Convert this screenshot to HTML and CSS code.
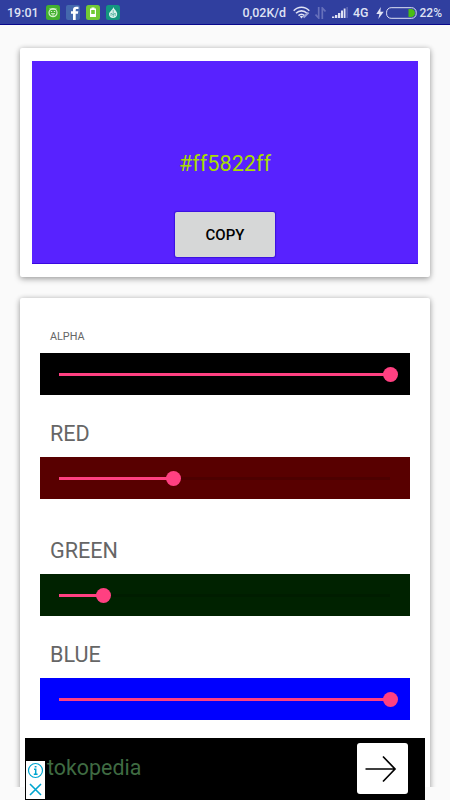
FILE: index.html
```html
<!DOCTYPE html>
<html>
<head>
    <meta charset="utf-8">
    <title>Color Picker</title>
    <link rel="stylesheet" href="styles.css">
</head>
<body>
    <header class="statusbar">
        <span class="clock">19:01</span>
        <svg class="app-icon" width="14" height="15" viewBox="0 0 14 15">
            <rect width="14" height="15" rx="2.5" fill="#43b02f"/>
            <path d="M4 5L3.5 3L5.5 4.2H8.5L10.5 3L10 5" fill="#d5f2cb"/>
            <circle cx="7" cy="7.7" r="4" fill="none" stroke="#d5f2cb" stroke-width="1.2"/>
            <path d="M4.8 6.5H6.2M7.8 6.5H9.2M5 8.7H9M6 10H8" stroke="#d5f2cb" fill="none"/>
        </svg>
        <svg class="app-icon" width="14" height="15" viewBox="0 0 14 15">
            <rect width="14" height="15" rx="2" fill="#4468ad"/>
            <path d="M7 15V8.8H5V6.3H7V4.8C7 2.6 8.2 1.7 10 1.7H12.5V4H10.7C9.9 4 9.7 4.4 9.7 5.1V6.3H12.3L11.9 8.8H9.7V15Z" fill="#fff"/>
        </svg>
        <svg class="app-icon" width="14" height="15" viewBox="0 0 14 15">
            <rect width="14" height="15" rx="2.5" fill="#72c935"/>
            <path d="M4 3.5H5.5V2.5H8.5V3.5H10V12H4Z" fill="#fff"/>
            <rect x="5.2" y="5" width="3.6" height="4" fill="#72c935"/>
        </svg>
        <svg class="app-icon" width="14" height="15" viewBox="0 0 14 15">
            <rect width="14" height="15" rx="2.5" fill="#13967f"/>
            <path d="M7.4 2C8 4.5 11.2 6 11.2 9C11.2 11.5 9.3 13 7 13C4.6 13 3 11.3 3 9.2C3 6.5 6.5 5.5 7.4 2Z" fill="#d9f3ec"/>
            <path d="M7.2 5V12M5 8V11M9.2 8V11M5 8L7.2 10L9.2 8" stroke="#3da893" stroke-width=".7" fill="none"/>
        </svg>

        <span class="speed">0,02K/d</span>
        <svg class="wifi" width="17" height="13" viewBox="0 0 17 13">
            <path d="M.7 4.7C5 0 12 0 16.3 4.7M3 7.3C6.2 4 10.8 4 14 7.3M5.5 9.7C7.3 8 9.7 8 11.5 9.7" fill="none" stroke="#dfe2f4" stroke-width="1.6"/>
            <path d="M6.8 10.5Q8.5 9.2 10.2 10.5L8.5 12.4Z" fill="#dfe2f4"/>
            <path d="M10.5 11.5L15.5 6.5" stroke="#9ea6d8" stroke-width="2.2"/>
        </svg>
        <svg class="data" width="11" height="12" viewBox="0 0 11 12">
            <path d="M3.7 0V11L.5 7.5M7.3 12V1L10.5 4.5" fill="none" stroke="#6670bb" stroke-width="1.7"/>
        </svg>
        <svg class="signal" width="16" height="11" viewBox="0 0 16 11">
            <path d="M0 11V9.5H2.3V11ZM3 11V8H5.3V11ZM6 11V6H8.3V11ZM9 11V3.5H11V11ZM11.7 11V1.5H13.5V11Z" fill="#dfe2f4"/>
            <path d="M14.3 11V0H16V11Z" fill="#5964b5"/>
        </svg>
        <span class="network">4G</span>
        <svg class="bolt" width="8" height="12" viewBox="0 0 8 12">
            <path d="M4.8 0L.3 7H3.4L2.3 12L7.7 4.7H4.4Z" fill="#dfe2f4"/>
        </svg>
        <svg class="battery" width="31" height="12" viewBox="0 0 31 12">
            <rect x=".6" y=".7" width="29.6" height="10.6" rx="4.5" fill="none" stroke="#dfe2f4"/>
            <path d="M22.5 2H25C30.3 2 30.3 10 25 10H22.5Z" fill="#49bd13"/>
        </svg>
        <span class="percent">22%</span>
    </header>

    <main class="content">
        <section class="card preview">
            <div class="swatch">
                <span class="hex">#ff5822ff</span>
                <button type="button" class="copy">COPY</button>
            </div>
        </section>

        <section class="card sliders">
            <label class="small">ALPHA</label>
            <div class="bar alpha"><div class="track"><div class="fill" style="width: 100%"></div></div></div>

            <label>RED</label>
            <div class="bar red"><div class="track"><div class="fill" style="width: 34.5%"></div></div></div>

            <label class="green-label">GREEN</label>
            <div class="bar green"><div class="track"><div class="fill" style="width: 13.3%"></div></div></div>

            <label>BLUE</label>
            <div class="bar blue"><div class="track"><div class="fill" style="width: 100%"></div></div></div>
        </section>
    </main>

    <footer class="ad">
        <div class="ad-choices">
            <svg width="17" height="17" viewBox="0 0 17 17">
                <circle cx="8.5" cy="8.5" r="7" fill="none" stroke="#00a5cf" stroke-width="1.2"/>
                <path d="M7 7.3H8.7V12.2M6.8 12.3H10.6M7.7 4.8H9.5" fill="none" stroke="#00a5cf" stroke-width="1.5"/>
            </svg>
            <svg width="17" height="17" viewBox="0 0 17 17">
                <path d="M3 3L14 14M14 3L3 14" stroke="#00a5cf" stroke-width="1.6"/>
            </svg>
        </div>
        <span class="ad-name">tokopedia</span>
        <div class="ad-go">
            <svg width="32" height="28" viewBox="0 0 32 28">
                <path d="M.5 14H30M18 1.5L30 14L18 26.5" fill="none" stroke="#000" stroke-width="1.7"/>
            </svg>
        </div>
    </footer>
</body>
</html>
```

FILE: styles.css
```css
* {
    box-sizing: border-box;
}

body {
    margin: 0;
    height: 800px;
    overflow: hidden;
    position: relative;
    font-family: Roboto, Arial, sans-serif;
    background-color: #fafafa;
}

.statusbar {
    display: flex;
    align-items: center;
    height: 25px;
    padding: 1px 8px 0 7px;
    background-color: #303f9f;
    border-bottom: 1px solid #08088c;
    color: #dfe2f4;
    font-size: 12px;
    font-weight: 500;
}

.statusbar svg {
    flex: none;
}

.clock {
    width: 39px;
    font-size: 12.5px;
}

.app-icon {
    margin-right: 6px;
}

.speed {
    margin-left: auto;
    font-size: 12.4px;
}

.wifi {
    margin-left: 7px;
}

.data {
    margin-left: 5px;
}

.signal {
    margin-left: 6px;
}

.network {
    margin-left: 5px;
    font-size: 12.4px;
}

.bolt {
    margin-left: 7px;
}

.battery {
    margin-left: 2px;
}

.percent {
    margin-left: 3px;
}

.content {
    height: 762px;
    padding: 23px 20px 0;
    overflow: hidden;
}

.card {
    background-color: #ffffff;
    border-radius: 2px;
    box-shadow: 0 2px 6px rgba(0, 0, 0, 0.32), 0 0 5px rgba(0, 0, 0, 0.12);
}

.preview {
    height: 229px;
    padding: 13px 12px;
}

.swatch {
    display: flex;
    flex-direction: column;
    align-items: center;
    height: 203px;
    padding-top: 90px;
    background-color: #5822ff;
    border-bottom: 1px solid #3a08e0;
}

.hex {
    color: #a7dd00;
    font-size: 21.6px;
    line-height: 26px;
}

.copy {
    width: 100px;
    height: 45px;
    margin-top: 35px;
    padding: 1px 0 0;
    border: none;
    border-radius: 2px;
    background-color: #d6d7d7;
    box-shadow: 0 0 1px 1px rgba(30, 0, 190, 0.5);
    color: #000000;
    font-family: inherit;
    font-size: 15px;
    font-weight: 500;
}

.sliders {
    height: 520px;
    margin-top: 21px;
    padding: 24px 20px 0;
}

label {
    display: block;
    height: 62px;
    padding: 26px 0 0 10px;
    color: #666666;
    font-size: 21.6px;
    line-height: 26px;
}

label.small {
    height: 31px;
    padding-top: 2px;
    font-size: 10.8px;
}

label.green-label {
    height: 75px;
    padding-top: 39px;
}

.bar {
    height: 42px;
    padding: 20px 20px 0 19px;
}

.track {
    height: 3px;
    background-color: rgba(0, 0, 0, 0.12);
}

.fill {
    position: relative;
    height: 3px;
    background-color: #ff4081;
}

.fill::after {
    content: "";
    position: absolute;
    right: -8px;
    top: -6px;
    width: 15px;
    height: 15px;
    border-radius: 50%;
    background-color: #ff4081;
}

.alpha {
    background-color: #000000;
}

.red {
    background-color: #580000;
}

.green {
    background-color: #002200;
}

.blue {
    background-color: #0000ff;
}

.ad {
    position: absolute;
    left: 25px;
    bottom: 0;
    display: flex;
    width: 400px;
    height: 62px;
    background-color: #000000;
}

.ad-choices {
    display: flex;
    flex-direction: column;
    justify-content: space-between;
    align-items: center;
    width: 19px;
    height: 38px;
    margin: 23px 0 0 1px;
    padding: 1px 0;
    background-color: #ffffff;
}

.ad-name {
    margin-left: 2px;
    padding-top: 16px;
    color: #3f6b42;
    font-size: 21.4px;
    line-height: 28px;
}

.ad-go {
    display: flex;
    align-items: center;
    justify-content: center;
    width: 51px;
    height: 51px;
    margin: 5px 17px 0 auto;
    padding-right: 4px;
    border-radius: 3px;
    background-color: #ffffff;
}
```
